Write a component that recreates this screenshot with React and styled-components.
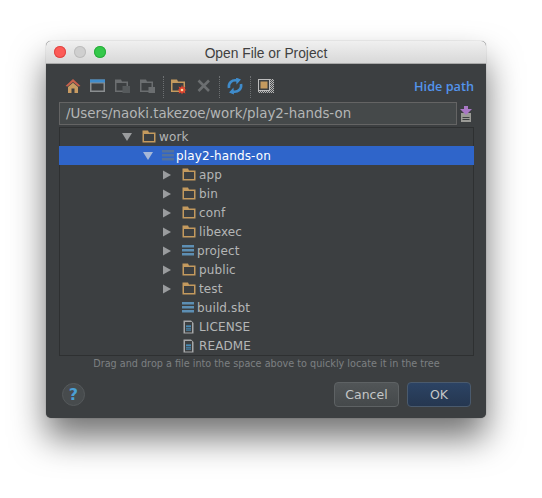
import React from "react";
import styled, { createGlobalStyle } from "styled-components";

const Global = createGlobalStyle`
  html, body { margin: 0; padding: 0; background: #fff; }
  body { width: 542px; height: 498px; overflow: hidden; font-family: "DejaVu Sans", "Open Sans", sans-serif; }
`;

const Page = styled.div`
  padding: 41px 0 0 46px;
`;

const Dialog = styled.div`
  width: 440px;
  height: 377px;
  border-radius: 5px;
  overflow: hidden;
  background: #3c3f41;
  display: flex;
  flex-direction: column;
  box-shadow: 0 20px 34px rgba(0, 0, 0, 0.55), 0 0 1px rgba(0, 0, 0, 0.5);
`;

const TitleBar = styled.div`
  height: 20px;
  padding-top: 2px;
  flex: none;
  position: relative;
  display: flex;
  align-items: center;
  justify-content: center;
  background: linear-gradient(#f0f0f0, #d8d8d8);
  border-bottom: 1px solid #a9a9a9;
  font-family: "Liberation Sans", sans-serif;
  font-size: 13.8px;
  color: #404040;
`;

const Lights = styled.div`
  position: absolute;
  left: 8px;
  top: 5px;
  display: flex;
  gap: 8px;
`;

const Light = styled.span`
  width: 12px;
  height: 12px;
  border-radius: 50%;
  background: ${p => p.$color};
  box-shadow: inset 0 0 0 1px ${p => p.$edge};
`;

const Body = styled.div`
  flex: 1;
  display: flex;
  flex-direction: column;
  padding: 10px 12px 11px 13px;
`;

const Toolbar = styled.div`
  height: 26px;
  display: flex;
  align-items: center;
  gap: 7px;
  padding-left: 5px;
`;

const ToolIcon = styled.svg`
  width: 18px;
  height: 18px;
  flex: none;
`;

const Divider = styled.span`
  width: 0;
  height: 22px;
  margin: 0 -1px;
  border-left: 1px dotted #6d7072;
`;

const HidePath = styled.span`
  margin-left: auto;
  margin-top: -2px;
  font-size: 12.7px;
  font-weight: 600;
  color: #5394ec;
  font-family: "Open Sans", sans-serif;
`;

const PathRow = styled.div`
  display: flex;
  align-items: center;
  margin-top: 2px;
  gap: 3px;
`;

const PathField = styled.div`
  width: 398px;
  height: 23px;
  box-sizing: border-box;
  border: 1px solid #646464;
  background: #45494a;
  color: #b4b6b6;
  font-size: 13.4px;
  line-height: 21px;
  padding-left: 6px;
  white-space: nowrap;
`;

const Tree = styled.div`
  margin-top: 2px;
  height: 229px;
  width: 415px;
  box-shadow: inset 0 0 0 1px #2e3031;
  overflow: hidden;
`;

const Row = styled.div`
  height: 19px;
  display: flex;
  align-items: center;
  padding-left: ${p => p.$indent}px;
  background: ${p => (p.$selected ? "#2f65ca" : "transparent")};
  color: ${p => (p.$selected ? "#ffffff" : "#b4b6b6")};
  font-size: 12px;
  letter-spacing: 0.12px;
  white-space: nowrap;
`;

const ArrowSlot = styled.span`
  width: 19px;
  flex: none;
  display: flex;
  align-items: center;
`;

const Label = styled.span`
  margin-left: ${p => p.$gap}px;
`;

const Hint = styled.div`
  margin-top: 1px;
  text-align: center;
  font-size: 9.67px;
  line-height: 14px;
  color: #7d8082;
  white-space: nowrap;
`;

const Footer = styled.div`
  margin-top: auto;
  margin-right: 3px;
  display: flex;
  align-items: center;
  justify-content: space-between;
`;

const Help = styled.div`
  width: 23px;
  height: 23px;
  box-sizing: border-box;
  border-radius: 50%;
  background: #474b4d;
  border: 1px solid #55595b;
  color: #4a9fd4;
  font-size: 16px;
  font-weight: 700;
  display: flex;
  align-items: center;
  justify-content: center;
  margin-left: 3px;
`;

const Buttons = styled.div`
  display: flex;
  gap: 8px;
`;

const Button = styled.div`
  width: ${p => p.$w}px;
  height: 25px;
  box-sizing: border-box;
  border-radius: 4px;
  border: 1px solid ${p => (p.$primary ? "#4a5a6d" : "#5e6264")};
  background: ${p =>
    p.$primary ? "linear-gradient(#2c4364, #253750)" : "linear-gradient(#515557, #45494b)"};
  color: #c4c6c7;
  font-size: 12.5px;
  display: flex;
  align-items: center;
  justify-content: center;
`;

const FolderSvg = styled.svg`
  flex: none;
  margin-left: 1px;
`;

const ModuleSvg = styled.svg`
  flex: none;
  margin-left: ${p => (p.$selected ? 0 : 1)}px;
`;

const FileSvg = styled.svg`
  flex: none;
  margin-left: 2px;
`;

const SaveSvg = styled.svg`
  flex: none;
`;

const Home = () => (
  <ToolIcon viewBox="0 0 18 18">
    <path d="M9 1 L1.5 8 L3.5 8.5 L9 4 L14.5 8.5 L16.5 8 Z" fill="#c7604c" />
    <path d="M4 9 L9 4.8 L14 9 V15 H10.5 V10.5 H7.5 V15 H4 Z" fill="#c89b62" />
  </ToolIcon>
);

const Desktop = () => (
  <ToolIcon viewBox="0 0 18 18">
    <rect x="1" y="1.5" width="15" height="12.5" fill="#8a8e90" />
    <rect x="1" y="1.5" width="15" height="3" fill="#3f8ccc" />
    <rect x="2.5" y="5.5" width="12" height="7" fill="#3c3f41" />
  </ToolIcon>
);

const FolderBadge = ({ square }) => (
  <ToolIcon viewBox="0 0 18 18">
    <path d="M1 1.5 H7 L8 3.5 H14 V14 H1 Z" fill="#6b6e70" />
    <rect x="2.5" y="5" width="10" height="7.5" fill="#3c3f41" />
    {square ? (
      <rect x="9.5" y="9" width="6.5" height="6" fill="#6b6e70" />
    ) : (
      <rect x="8.5" y="8" width="7.5" height="7" fill="#565a5c" />
    )}
  </ToolIcon>
);

const NewFolder = () => (
  <ToolIcon viewBox="0 0 18 18">
    <path d="M1 1.5 H7 L8 3.5 H15 V14 H1 Z" fill="#c49a5e" />
    <rect x="2.5" y="5" width="11" height="7.5" fill="#3c3f41" />
    <path
      d="M12 7 L13 9.5 L15.5 8.5 L14.5 11 L16.5 12 L14.5 13 L15.5 15.5 L13 14.5 L12 16.5 L11 14.5 L8.5 15.5 L9.5 13 L7.5 12 L9.5 11 L8.5 8.5 L11 9.5 Z"
      fill="#e0452f"
    />
    <circle cx="12" cy="12" r="1.3" fill="#f7d9a0" />
  </ToolIcon>
);

const Cross = () => (
  <ToolIcon viewBox="0 0 18 18">
    <path d="M3.5 2.5 L14 13 M14 2.5 L3.5 13" stroke="#6b6e70" strokeWidth="2.6" />
  </ToolIcon>
);

const Sync = () => (
  <ToolIcon viewBox="0 0 18 18">
    <path
      d="M3 10 C2 5 6 1.5 11 2.5 M15 6 C16 11 12 14.5 7 13.5"
      fill="none"
      stroke="#3f8ccc"
      strokeWidth="2.6"
    />
    <path d="M10 -0.5 L15 1.5 L10.5 6.5 Z M8 16.5 L3 14.5 L7.5 9.5 Z" fill="#3f8ccc" />
  </ToolIcon>
);

const Frame = () => (
  <ToolIcon viewBox="0 0 18 18">
    <defs>
      <pattern id="checker" width="2" height="2" patternUnits="userSpaceOnUse">
        <rect width="2" height="2" fill="#4a4d4f" />
        <rect width="1" height="1" fill="#b5b5b5" />
        <rect x="1" y="1" width="1" height="1" fill="#b5b5b5" />
      </pattern>
    </defs>
    <rect x="1" y="1" width="16" height="14" fill="url(#checker)" />
    <rect x="1" y="1" width="12" height="12" fill="#bdbdbd" />
    <rect x="2" y="2" width="10" height="10" fill="#3c3f41" />
    <rect x="3.5" y="3.5" width="7" height="7" fill="#c49a5e" />
  </ToolIcon>
);

const Save = () => (
  <SaveSvg width="12" height="16" viewBox="0 0 12 16">
    <rect x="1" y="7" width="10" height="9" fill="#9a9a96" />
    <rect x="2.5" y="11" width="7" height="1" fill="#3c3f41" />
    <rect x="2.5" y="13" width="7" height="1" fill="#3c3f41" />
    <path d="M4 0 H8 V3 H12 L6 9 L0 3 H4 Z" fill="#a877c4" />
  </SaveSvg>
);

const Arrow = ({ open, selected }) => (
  <svg width="10" height="10" viewBox="0 0 10 10">
    {open ? (
      <path d="M0 1 H10 L5 9 Z" fill={selected ? "#a6b8d8" : "#9a9c9e"} />
    ) : (
      <path d="M1 0.5 L9 5 L1 9.5 Z" fill="#9a9c9e" />
    )}
  </svg>
);

const Folder = () => (
  <FolderSvg width="14" height="13" viewBox="0 0 14 13">
    <path d="M0.5 0.5 H6 L7 2.5 H13.5 V12.5 H0.5 Z" fill="#c49a5e" />
    <rect x="2" y="4" width="10" height="7" fill="#3c3f41" />
  </FolderSvg>
);

const Module = ({ selected }) => {
  const color = selected ? "#54729c" : "#5d8fb4";
  return (
    <ModuleSvg $selected={selected} width="12" height="11" viewBox="0 0 12 11">
      <rect y="0" width="12" height="2.5" fill={color} />
      <rect y="4" width="12" height="2.5" fill={color} />
      <rect y="8" width="12" height="2.5" fill={color} />
    </ModuleSvg>
  );
};

const FileDoc = () => (
  <FileSvg width="11" height="14" viewBox="0 0 11 14">
    <path d="M0.5 0.5 H8 L10.5 3 V13.5 H0.5 Z" fill="#a6a8a9" />
    <rect x="2" y="2" width="7" height="10.5" fill="#3c3f41" />
    <rect x="3" y="5.5" width="5" height="5" fill="#4a9fd4" />
    <rect x="3" y="6.8" width="5" height="1" fill="#3c3f41" />
    <rect x="3" y="8.6" width="5" height="1" fill="#3c3f41" />
  </FileSvg>
);

const rows = [
  { name: "work", indent: 63, open: true, icon: "folder", gap: 3 },
  { name: "play2-hands-on", indent: 84, open: true, icon: "module", gap: 2, selected: true },
  { name: "app", indent: 103, closed: true, icon: "folder", gap: 3 },
  { name: "bin", indent: 103, closed: true, icon: "folder", gap: 3 },
  { name: "conf", indent: 103, closed: true, icon: "folder", gap: 3 },
  { name: "libexec", indent: 103, closed: true, icon: "folder", gap: 3 },
  { name: "project", indent: 103, closed: true, icon: "module", gap: 3 },
  { name: "public", indent: 103, closed: true, icon: "folder", gap: 3 },
  { name: "test", indent: 103, closed: true, icon: "folder", gap: 3 },
  { name: "build.sbt", indent: 103, icon: "module", gap: 3 },
  { name: "LICENSE", indent: 103, icon: "file", gap: 5 },
  { name: "README", indent: 103, icon: "file", gap: 5 },
];

function App() {
  return (
    <Page>
      <Global />
      <Dialog>
        <TitleBar>
          <Lights>
            <Light $color="#fc5b57" $edge="#df4744" />
            <Light $color="#cfcfcf" $edge="#bdbdbd" />
            <Light $color="#34c84a" $edge="#2aac3c" />
          </Lights>
          Open File or Project
        </TitleBar>
        <Body>
          <Toolbar>
            <Home />
            <Desktop />
            <FolderBadge />
            <FolderBadge square />
            <Divider />
            <NewFolder />
            <Cross />
            <Divider />
            <Sync />
            <Divider />
            <Frame />
            <HidePath>Hide path</HidePath>
          </Toolbar>
          <PathRow>
            <PathField>/Users/naoki.takezoe/work/play2-hands-on</PathField>
            <Save />
          </PathRow>
          <Tree>
            {rows.map(r => (
              <Row key={r.name} $indent={r.indent} $selected={r.selected}>
                <ArrowSlot>
                  {(r.open || r.closed) && <Arrow open={r.open} selected={r.selected} />}
                </ArrowSlot>
                {r.icon === "folder" && <Folder />}
                {r.icon === "module" && <Module selected={r.selected} />}
                {r.icon === "file" && <FileDoc />}
                <Label $gap={r.gap}>{r.name}</Label>
              </Row>
            ))}
          </Tree>
          <Hint>Drag and drop a file into the space above to quickly locate it in the tree</Hint>
          <Footer>
            <Help>?</Help>
            <Buttons>
              <Button $w={65}>Cancel</Button>
              <Button $w={64} $primary>OK</Button>
            </Buttons>
          </Footer>
        </Body>
      </Dialog>
    </Page>
  );
}

export default App;
